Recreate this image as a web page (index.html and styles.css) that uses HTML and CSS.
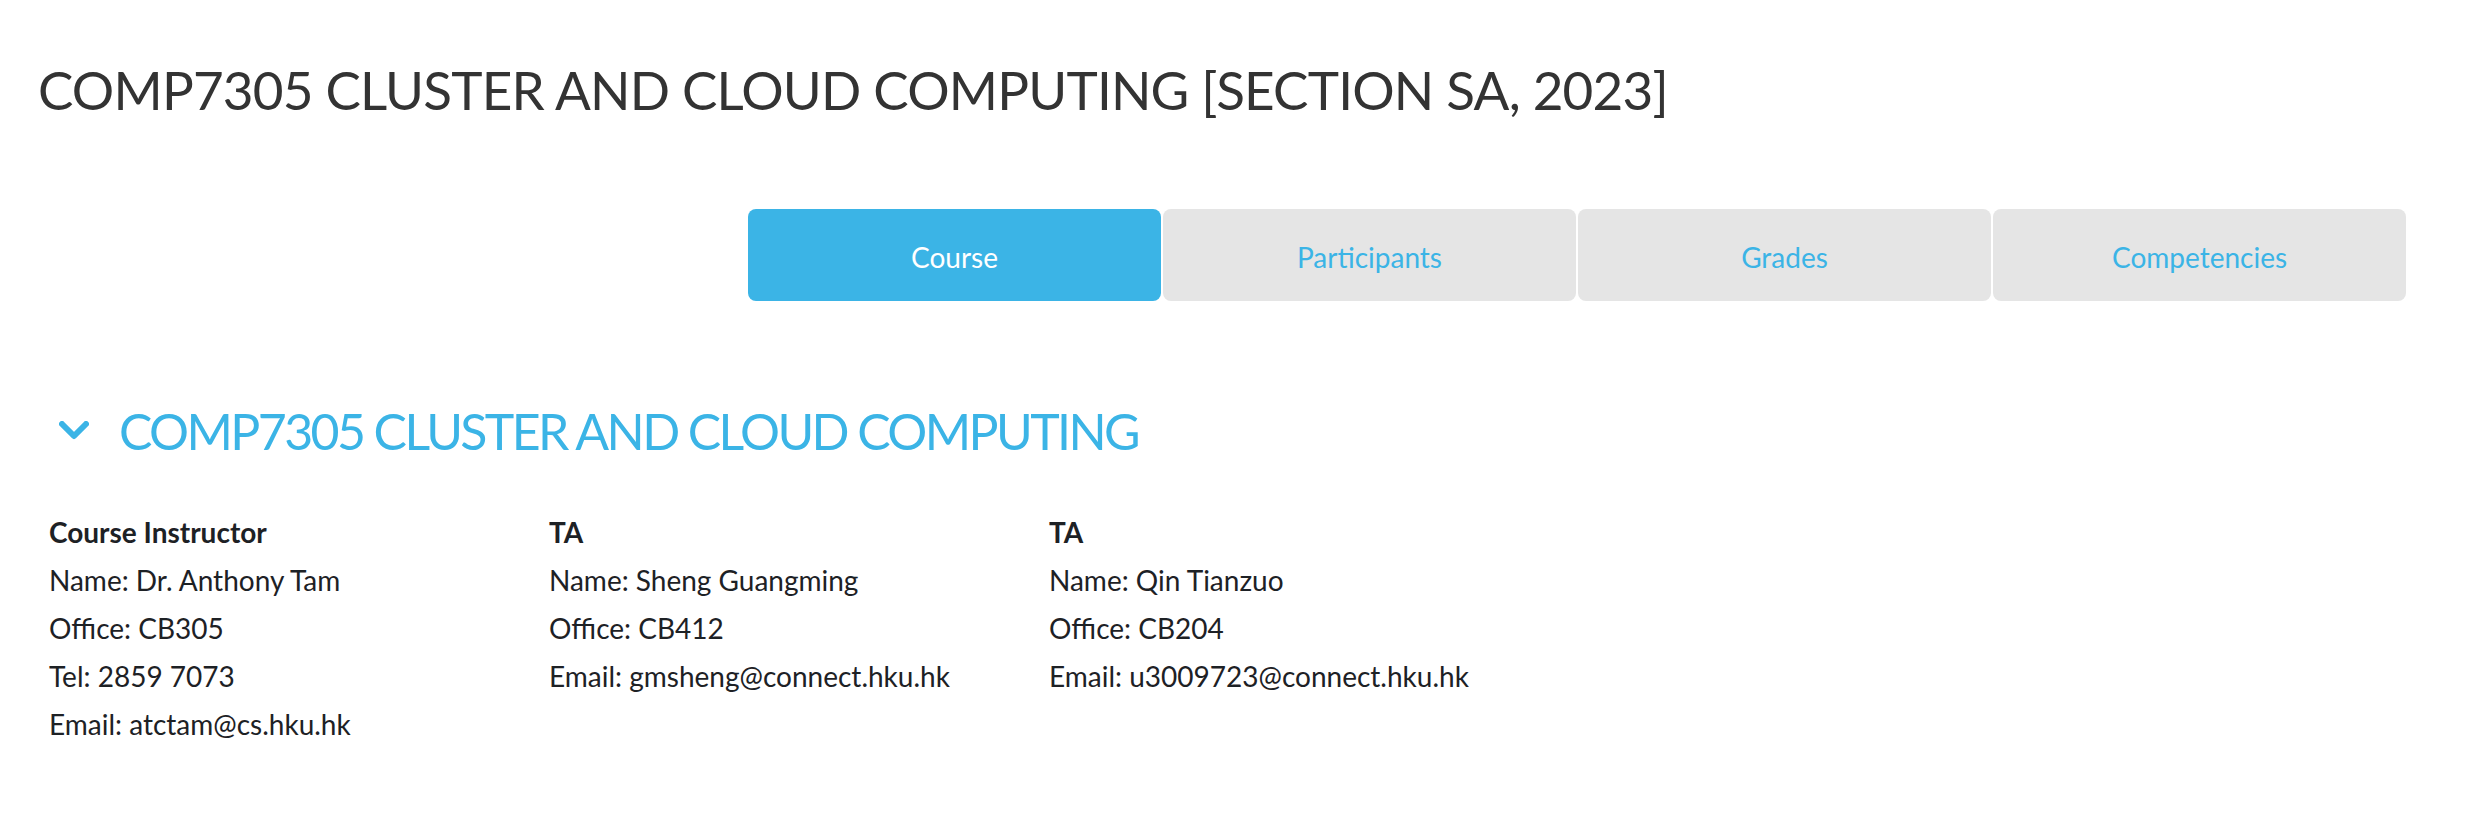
FILE: index.html
```html
<!DOCTYPE html>
<html lang="en">
<head>
<meta charset="utf-8">
<title>COMP7305 Cluster and Cloud Computing</title>
<link rel="stylesheet" href="styles.css">
</head>
<body>
<div class="page">
  <h1 class="page-title">COMP7305 CLUSTER AND CLOUD COMPUTING [SECTION SA, 2023]</h1>
  <nav class="tabs">
    <a class="tab active">Course</a>
    <a class="tab">Participants</a>
    <a class="tab">Grades</a>
    <a class="tab">Competencies</a>
  </nav>
  <section class="section">
    <h2 class="section-title">
      <svg class="chevron" width="30" height="20" viewBox="0 0 30 20"><polyline points="3,3 15,15 27,3" fill="none" stroke="currentColor" stroke-width="6" stroke-linecap="round" stroke-linejoin="round"/></svg>
      <span>COMP7305 CLUSTER AND CLOUD COMPUTING</span>
    </h2>
    <div class="contacts">
      <div class="contact">
        <p class="role">Course Instructor</p>
        <p>Name: Dr. Anthony Tam</p>
        <p>Office: CB305</p>
        <p>Tel: 2859 7073</p>
        <p>Email: atctam@cs.hku.hk</p>
      </div>
      <div class="contact">
        <p class="role">TA</p>
        <p>Name: Sheng Guangming</p>
        <p>Office: CB412</p>
        <p>Email: gmsheng@connect.hku.hk</p>
      </div>
      <div class="contact">
        <p class="role">TA</p>
        <p>Name: Qin Tianzuo</p>
        <p>Office: CB204</p>
        <p>Email: u3009723@connect.hku.hk</p>
      </div>
    </div>
  </section>
</div>
</body>
</html>
```
FILE: styles.css
```css
html, body {
  margin: 0;
  padding: 0;
  background: #ffffff;
}
body {
  font-family: Lato, "Noto Sans", sans-serif;
  color: #1d2125;
}
.page {
  padding: 58px 0 0 38px;
}
.page-title {
  margin: 0;
  font-size: 53px;
  line-height: 1.2;
  font-weight: 400;
  color: #333333;
  letter-spacing: -0.8px;
}
.tabs {
  display: flex;
  justify-content: flex-end;
  gap: 2px;
  margin-top: 87px;
  padding-right: 86px;
}
.tab {
  width: 413px;
  height: 92px;
  box-sizing: border-box;
  padding-top: 4px;
  display: flex;
  align-items: center;
  justify-content: center;
  background: #e5e5e5;
  color: #3bb4e6;
  font-size: 28px;
  border-radius: 8px;
  text-decoration: none;
}
.tab.active {
  background: #3bb4e6;
  color: #ffffff;
}
.section {
  margin-top: 100px;
}
.section-title {
  margin: 0;
  display: flex;
  align-items: center;
  gap: 30px;
  font-size: 50px;
  line-height: 1.2;
  font-weight: 400;
  color: #3bb4e6;
  padding-left: 21px;
}
.section-title span {
  letter-spacing: -2.6px;
}
.chevron {
  flex: none;
}
.contacts {
  display: grid;
  grid-template-columns: 500px 500px 500px;
  margin-top: 47px;
  padding-left: 11px;
}
.contact p {
  margin: 0;
  font-size: 28px;
  line-height: 48px;
}
.contact .role {
  font-weight: 700;
}
```
